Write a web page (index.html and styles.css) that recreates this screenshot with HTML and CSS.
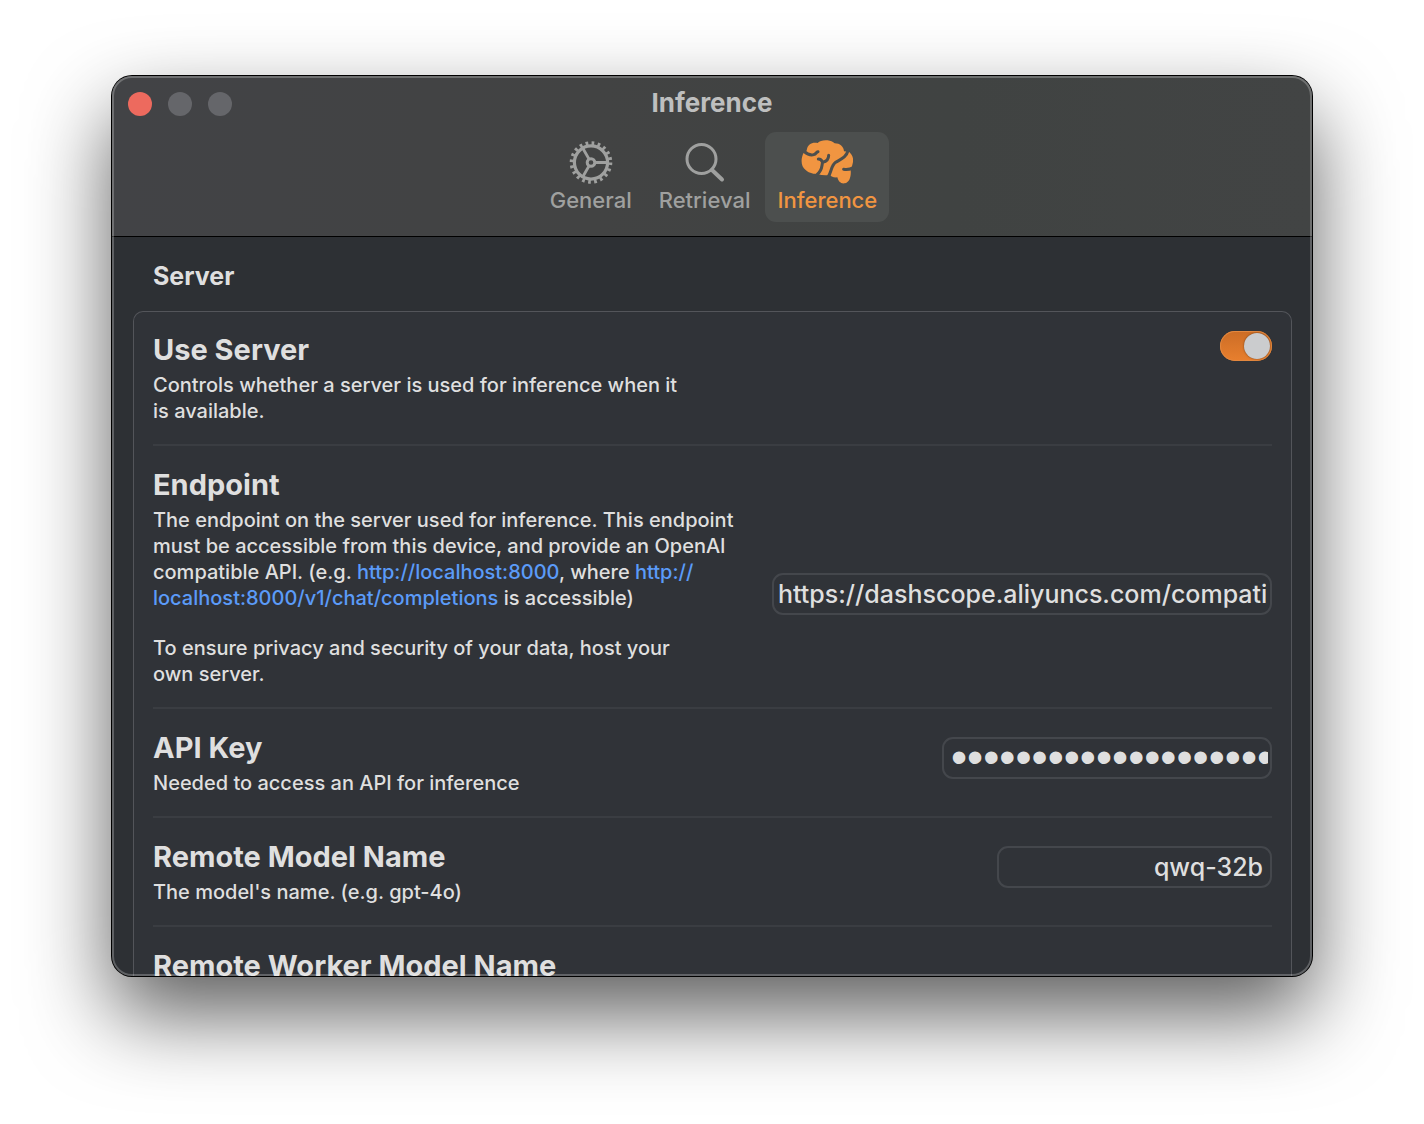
FILE: index.html
```html
<!DOCTYPE html>
<html lang="en">
<head>
<meta charset="utf-8">
<title>Inference</title>
<link rel="stylesheet" href="styles.css">
</head>
<body>
<main class="window">
  <header class="toolbar">
    <div class="titlebar">
      <div class="lights">
        <button class="light light-close" aria-label="Close"></button>
        <button class="light" aria-label="Minimize"></button>
        <button class="light" aria-label="Zoom"></button>
      </div>
      <h1 class="title">Inference</h1>
    </div>
    <nav class="tabs">
      <button class="tab">
        <svg class="icon" viewBox="0 0 52 44" fill="none" stroke="currentColor" aria-hidden="true">
          <circle cx="26" cy="22.500" r="16.600" stroke-width="3.200"/>
          <circle cx="26" cy="22.500" r="19.400" stroke-width="3.800" stroke-dasharray="2.700 3.395"/>
          <circle cx="26" cy="22.500" r="3.800" stroke-width="3"/>
          <path d="M30 22.500H43M24 19L17.500 7.800M24 26L17.500 37.200" stroke-width="2.800"/>
        </svg>
        <span>General</span>
      </button>
      <button class="tab">
        <svg class="icon" viewBox="0 0 52 44" fill="none" stroke="currentColor" stroke-linecap="round" aria-hidden="true">
          <circle cx="22.500" cy="19" r="14.500" stroke-width="3"/>
          <path d="M33 30L43 39.500" stroke-width="4"/>
        </svg>
        <span>Retrieval</span>
      </button>
      <button class="tab tab-active" aria-current="page">
        <svg class="icon" viewBox="0 0 156 132" aria-hidden="true">
          <path fill="currentColor" d="M18 27C20 13 34 5 50 9C57 2 70-1 86 2C94 4 99 8 101 10C117 10 128 20 129 34L144 35C152 42 158 52 156 66C154 76 152 82 149 90C151 108 146 128 131 130C119 132 112 124 109 112C96 113 88 108 87 104C78 107 64 106 50 103C40 101 26 101 14 90C0 80-2 58 8 38C14 36 17 34 18 27Z"/>
          <path class="groove" d="M8 33C16 40 28 47 38 44C46 42 45 36 51 35M52 57C57 57 62 60 64 66M83 46C83 58 76 65 65 67C61 78 66 88 48 104M142 30C135 54 118 58 104 67C90 77 92 94 82 110M158 83C146 89 138 90 128 88"/>
        </svg>
        <span>Inference</span>
      </button>
    </nav>
  </header>

  <section class="content">
    <h2 class="section-title">Server</h2>
    <div class="group">
      <div class="row">
        <div class="copy">
          <label class="name" for="use-server">Use Server</label>
          <p class="hint">Controls whether a server is used for inference when it<br>is available.</p>
        </div>
        <input class="switch" type="checkbox" role="switch" id="use-server" checked>
      </div>
      <div class="row row-endpoint">
        <div class="copy">
          <label class="name" for="endpoint">Endpoint</label>
          <p class="hint">The endpoint on the server used for inference. This endpoint<br>must be accessible from this device, and provide an OpenAI<br>compatible API. (e.g. <a href="http://localhost:8000">http://localhost:8000</a>, where <a href="http://localhost:8000/v1/chat/completions">http://<br>localhost:8000/v1/chat/completions</a> is accessible)</p>
          <p class="hint">To ensure privacy and security of your data, host your<br>own server.</p>
        </div>
        <input class="field field-wide" type="text" id="endpoint" value="https://dashscope.aliyuncs.com/compati">
      </div>
      <div class="row">
        <div class="copy">
          <label class="name" for="api-key">API Key</label>
          <p class="hint">Needed to access an API for inference</p>
        </div>
        <input class="field field-key" type="password" id="api-key" value="0000000000000000000000000000">
      </div>
      <div class="row">
        <div class="copy">
          <label class="name" for="model">Remote Model Name</label>
          <p class="hint">The model's name. (e.g. gpt-4o)</p>
        </div>
        <input class="field field-model" type="text" id="model" value="qwq-32b">
      </div>
      <div class="row">
        <div class="copy">
          <h3 class="name">Remote Worker Model Name</h3>
        </div>
      </div>
    </div>
  </section>
</main>
</body>
</html>
```
FILE: styles.css
```css
* { box-sizing: border-box; }

body {
  margin: 0;
  height: 100vh;
  padding: 76px 112px 148px;
  background: #fff;
  color: #dfdfdf;
  font-family: Inter, "Liberation Sans", sans-serif;
  overflow: hidden;
}

h1, h2, h3, p { margin: 0; }
button, input { font: inherit; color: inherit; }

.window {
  position: relative;
  display: flex;
  flex-direction: column;
  height: 100%;
  border-radius: 20px;
  background: #2d3034;
  box-shadow: 0 0 0 1px #000, 0 38px 84px rgba(0, 0, 0, .64);
}

/* light rim drawn over the content */
.window::after {
  content: "";
  position: absolute;
  inset: 0;
  border: 2px solid rgba(255, 255, 255, .24);
  border-radius: 20px;
  pointer-events: none;
}

.toolbar {
  flex: none;
  height: 161px;
  border-bottom: 1px solid #000;
  border-radius: 20px 20px 0 0;
  background: linear-gradient(90deg, #424346, #424343 40%, #404342 70%, #424444);
}

.titlebar {
  display: grid;
  grid-template-columns: 1fr auto 1fr;
  align-items: center;
  height: 56px;
  padding: 0 16px;
}

.lights { display: flex; gap: 16px; }

.light {
  width: 24px;
  height: 24px;
  padding: 0;
  border: 0;
  border-radius: 50%;
  background: #65666a;
}

.light-close { background: #ed6a5e; }

.title {
  padding-bottom: 2px;
  color: #bebfbf;
  font-size: 26px;
  font-weight: 700;
  line-height: 32px;
}

.tabs { display: flex; justify-content: center; gap: 3px; padding-left: 3px; }

.tab {
  display: flex;
  flex-direction: column;
  align-items: center;
  gap: 2px;
  height: 90px;
  padding: 8px 12px;
  border: 0;
  border-radius: 11px;
  background: none;
  color: #9fa09f;
  font-size: 22px;
  font-weight: 500;
  line-height: 28px;
}

.tab-active { background: #4c4f4e; color: #f19541; }

.icon { width: 52px; height: 44px; }

.groove { fill: none; stroke: #4c4f4e; stroke-width: 9; stroke-linecap: round; }

.content {
  flex: 1;
  min-height: 0;
  padding: 20px 20px 0 21px;
  border-radius: 0 0 20px 20px;
  overflow: hidden;
}

.section-title {
  padding: 0 20px;
  margin-bottom: 16px;
  font-size: 25px;
  font-weight: 700;
  line-height: 38px;
}

.group {
  padding: 0 20px;
  border-radius: 10px;
  background: #303338;
  box-shadow: inset 0 0 0 1px #53555a;
}

.row {
  display: flex;
  justify-content: space-between;
  align-items: flex-start;
  padding: 20px 0;
  border-bottom: 2px solid #3a3d42;
}

.row-endpoint { align-items: center; }

.name {
  display: block;
  margin-bottom: 3px;
  font-size: 29px;
  font-weight: 700;
  line-height: 38px;
}

.hint { font-size: 20px; font-weight: 500; line-height: 26px; white-space: nowrap; }
.hint + .hint { margin-top: 24px; }
.hint a { color: #5b9bf8; text-decoration: none; }

.switch {
  appearance: none;
  display: flex;
  justify-content: flex-end;
  width: 52px;
  height: 30px;
  margin: 0;
  padding: 2px;
  border-radius: 15px;
  background: linear-gradient(#cc6d26, #e87f2e);
  box-shadow: inset 0 0 0 1px #e3883f;
}

.switch::before {
  content: "";
  width: 26px;
  height: 26px;
  border-radius: 50%;
  background: #cbccce;
  box-shadow: 0 0 2px rgba(0, 0, 0, .5);
}

.field {
  height: 42px;
  margin: 8px 0 0;
  padding: 0 4px;
  border: 2px solid #44474c;
  border-radius: 11px;
  background: transparent;
  font-size: 25px;
  font-weight: 500;
  line-height: 36px;
}

.field-wide { width: 500px; margin-top: 35px; }

/* a larger face here gives the heavy, wide-set bullets */
.field-key {
  width: 330px;
  padding: 0 2px 2px 7px;
  font-family: "Liberation Sans", sans-serif;
  font-size: 46px;
  font-weight: 400;
}

.field-model { width: 275px; padding-right: 7px; text-align: right; }
```
